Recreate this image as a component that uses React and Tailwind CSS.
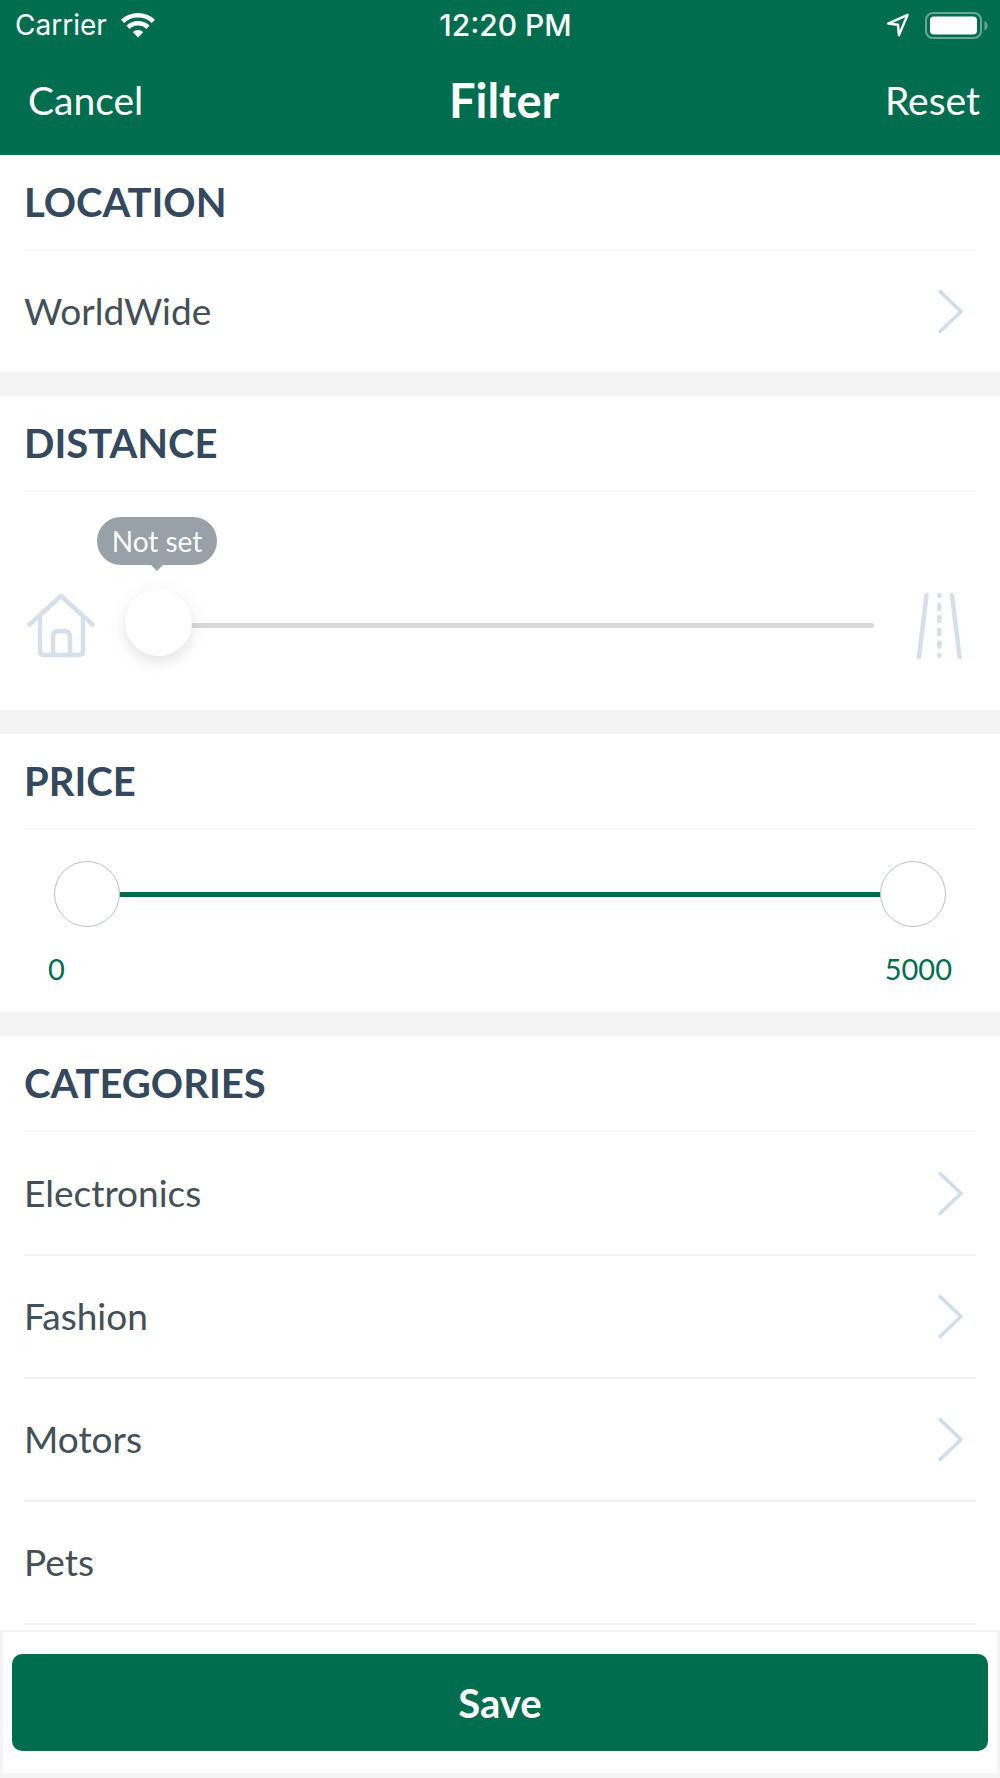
import React, { useState } from 'react';

const categories = [
  { name: 'Electronics', nested: true },
  { name: 'Fashion', nested: true },
  { name: 'Motors', nested: true },
  { name: 'Pets', nested: false },
];

const WifiIcon = () => (
  <svg className="w-[34px] h-[25px]" viewBox="0 0 34 25" fill="none" stroke="#fff" aria-hidden="true">
    <path d="M1.6 8.4a22.5 22.5 0 0 1 30.8 0" strokeWidth="4.6" />
    <path d="M7 14.2a14.6 14.6 0 0 1 20 0" strokeWidth="4.6" />
    <path d="M17 24.4l-5.2-5.3a7.6 7.6 0 0 1 10.4 0z" fill="#fff" stroke="none" />
  </svg>
);

const LocationArrow = () => (
  <svg className="w-[22px] h-[24px]" viewBox="0 0 22 24" fill="none" stroke="#fff" strokeWidth="2.4" strokeLinejoin="round" aria-hidden="true">
    <path d="M20.6 1.8L1.2 10.6l9.8 1.2.9 10.4z" />
  </svg>
);

const BatteryIcon = () => (
  <svg className="w-[63px] h-[27px]" viewBox="0 0 63 27" aria-hidden="true">
    <rect x="1" y="1" width="55" height="25" rx="7" fill="none" stroke="#fff" strokeOpacity="0.4" strokeWidth="2" />
    <rect x="5" y="4.5" width="47" height="18" rx="4" fill="#fff" />
    <path d="M59.5 9v9.5c4.200-1.500 4.200-8 0-9.500z" fill="#fff" fillOpacity="0.4" />
  </svg>
);

const Chevron = () => (
  <svg className="w-[25px] h-[45px]" viewBox="0 0 25 45" fill="none" stroke="#d1dde9" strokeWidth="3.5" aria-hidden="true">
    <path d="M1 1.5L23 22.5L1 43.5" />
  </svg>
);

const HouseIcon = () => (
  <svg className="w-[68px] h-[66px]" viewBox="0 0 68 66" fill="none" stroke="#d5e0ea" strokeWidth="4.5" strokeLinecap="round" strokeLinejoin="round" aria-hidden="true">
    <path d="M2.500 32.500L34 4l31.500 28.500" />
    <path d="M13 24v35q0 4 4 4h35q4 0 4-4V24" />
    <path d="M26 62V45q0-6 6-6h5q6 0 6 6v17" />
  </svg>
);

const RoadIcon = () => (
  <svg className="w-[46px] h-[68px]" viewBox="0 0 46 68" fill="none" stroke="#d5e0ea" strokeWidth="4.5" strokeLinecap="round" aria-hidden="true">
    <path d="M10.5 3L3 65M36 3l7.500 62" />
    <path d="M23.3 3v1M23.3 13v4M23.3 25v4M23.3 38v4M23.3 50.5v4M23.3 63v1" />
  </svg>
);

const Section = ({ title, children }) => (
  <section className="border-b-24 border-[#f3f3f3] last:border-b-0">
    <h2 className="mx-6 flex h-24 items-center border-b-2 border-[#f7f7f7] text-[40px] font-bold text-[#34495e]">{title}</h2>
    {children}
  </section>
);

const Row = ({ label, nested }) => (
  <button type="button" className="flex h-[121px] w-full items-center justify-between pr-[13px] text-left text-[37px] text-[#444f57]">
    <span className="pb-[2px]">{label}</span>
    {nested && <Chevron />}
  </button>
);

const priceThumb =
  'pointer-events-none col-start-1 row-start-1 h-[66px] w-full appearance-none bg-transparent [&::-webkit-slider-thumb]:pointer-events-auto [&::-webkit-slider-thumb]:h-[66px] [&::-webkit-slider-thumb]:w-[66px] [&::-webkit-slider-thumb]:appearance-none [&::-webkit-slider-thumb]:rounded-full [&::-webkit-slider-thumb]:border [&::-webkit-slider-thumb]:border-[#b9c2cb] [&::-webkit-slider-thumb]:bg-white';

const App = () => {
  const [distance, setDistance] = useState(0);
  const [min, setMin] = useState(0);
  const [max, setMax] = useState(5000);

  return (
    <div className="flex min-h-screen flex-col bg-white font-['Lato',sans-serif]">
      <header className="h-[155px] bg-[#006d4f] text-white">
        <div className="grid h-[50px] grid-cols-3 items-center pl-[15px] pr-3 font-['Inter',sans-serif] text-[28px]">
          <div className="flex items-center gap-[14px]">
            Carrier
            <WifiIcon />
          </div>
          <time className="pl-2 text-center text-[30px] font-medium">12:20 PM</time>
          <div className="flex items-center justify-end gap-4">
            <LocationArrow />
            <BatteryIcon />
          </div>
        </div>
        <nav className="grid h-[105px] grid-cols-3 items-start pl-7 pr-5">
          <button type="button" className="h-[100px] justify-self-start text-[39px]">Cancel</button>
          <h1 className="text-center text-[47px] leading-[100px] font-bold">Filter</h1>
          <button type="button" className="h-[100px] justify-self-end text-[39px]">Reset</button>
        </nav>
      </header>

      <main className="flex-1">
        <Section title="LOCATION">
          <div className="mx-6">
            <Row label="WorldWide" nested />
          </div>
        </Section>

        <Section title="DISTANCE">
          <div className="flex h-[218px] items-start justify-between pt-[100px] pl-[27px] pr-[38px]">
            <HouseIcon />
            <div className="relative ml-[30px] mr-[42px] flex-1">
              <output htmlFor="distance" className="absolute -top-[75px] -left-7 flex h-12 w-[120px] items-center justify-center rounded-full bg-[#98a0a8] text-[28px] text-white">
                {distance > 0 ? distance : 'Not set'}
                <span className="absolute top-full border-x-6 border-t-6 border-x-transparent border-t-[#98a0a8]" />
              </output>
              <input
                id="distance"
                type="range"
                aria-label="Distance"
                min="0"
                max="100"
                value={distance}
                onChange={(e) => setDistance(Number(e.target.value))}
                className="block h-[66px] w-full appearance-none bg-transparent [&::-webkit-slider-runnable-track]:h-[5px] [&::-webkit-slider-runnable-track]:rounded-full [&::-webkit-slider-runnable-track]:bg-[#d9d9d9] [&::-webkit-slider-thumb]:-mt-[34px] [&::-webkit-slider-thumb]:h-[67px] [&::-webkit-slider-thumb]:w-[67px] [&::-webkit-slider-thumb]:appearance-none [&::-webkit-slider-thumb]:rounded-full [&::-webkit-slider-thumb]:bg-white [&::-webkit-slider-thumb]:shadow-[0_7px_12px_rgba(0,0,0,0.07),0_3px_24px_rgba(0,0,0,0.05)]"
              />
            </div>
            <RoadIcon />
          </div>
        </Section>

        <Section title="PRICE">
          <div className="h-[182px] pt-[31px]">
            <div className="mx-[54px] grid items-center">
              <div className="col-start-1 row-start-1 mx-8 h-[5px] bg-[#006d4f]" />
              <input type="range" aria-label="Minimum price" min="0" max="5000" value={min} onChange={(e) => setMin(Math.min(Number(e.target.value), max))} className={priceThumb} />
              <input type="range" aria-label="Maximum price" min="0" max="5000" value={max} onChange={(e) => setMax(Math.max(Number(e.target.value), min))} className={priceThumb} />
            </div>
            <div className="mx-12 mt-[22px] flex justify-between text-[29px] leading-10 text-[#006d4f]">
              <span>{min}</span>
              <span>{max}</span>
            </div>
          </div>
        </Section>

        <Section title="CATEGORIES">
          <ul className="mx-6 pt-px">
            {categories.map((x) => (
              <li key={x.name} className="border-b-2 border-[#f3f3f3]">
                <Row label={x.name} nested={x.nested} />
              </li>
            ))}
          </ul>
        </Section>
      </main>

      <footer className="sticky bottom-0 border-x-3 border-t-2 border-b-5 border-[#f3f3f3] bg-white px-[9px] py-[22px]">
        <button type="button" className="h-[97px] w-full rounded-[10px] bg-[#006d4f] text-[40px] font-bold text-white">Save</button>
      </footer>
    </div>
  );
};

export default App;
